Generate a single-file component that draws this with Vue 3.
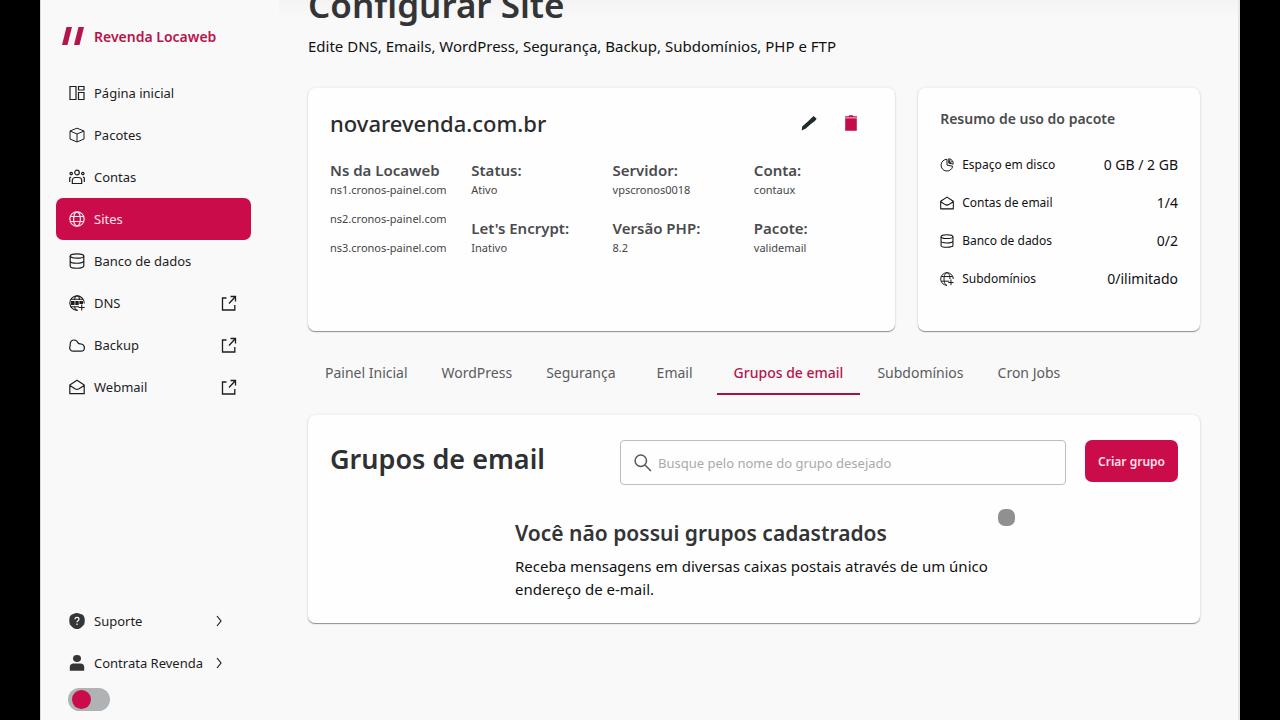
<script setup>
import { ref } from 'vue'

const menu = [
  { label: 'Página inicial', icon: 'home' },
  { label: 'Pacotes', icon: 'box' },
  { label: 'Contas', icon: 'people' },
  { label: 'Sites', icon: 'globe', active: true },
  { label: 'Banco de dados', icon: 'database' },
  { label: 'DNS', icon: 'dns', external: true },
  { label: 'Backup', icon: 'cloud', external: true },
  { label: 'Webmail', icon: 'mail', external: true }
]

const nameservers = ['ns1.cronos-painel.com', 'ns2.cronos-painel.com', 'ns3.cronos-painel.com']

const details = [
  [{ term: 'Status:', value: 'Ativo' }, { term: "Let's Encrypt:", value: 'Inativo' }],
  [{ term: 'Servidor:', value: 'vpscronos0018' }, { term: 'Versão PHP:', value: '8.2' }],
  [{ term: 'Conta:', value: 'contaux' }, { term: 'Pacote:', value: 'validemail' }]
]

const usage = [
  { label: 'Espaço em disco', icon: 'pie', value: '0 GB / 2 GB' },
  { label: 'Contas de email', icon: 'mail', value: '1/4' },
  { label: 'Banco de dados', icon: 'database', value: '0/2' },
  { label: 'Subdomínios', icon: 'subdomain', value: '0/ilimitado' }
]

const tabs = ['Painel Inicial', 'WordPress', 'Segurança', 'Email', 'Grupos de email', 'Subdomínios', 'Cron Jobs']
const activeTab = ref('Grupos de email')
const search = ref('')
const darkMode = ref(false)
</script>

<template>
  <svg class="sprite" aria-hidden="true">
    <symbol id="home" viewBox="0 0 16 16">
      <path d="M1 1.500h6v13H1zM9.500 1.500h5.500v3.500H9.500zM9.500 7.500h5.500v7H9.500z" fill="none" stroke="currentColor" stroke-width="1.200" />
    </symbol>
    <symbol id="box" viewBox="0 0 16 16">
      <path d="M8 1.200 15 4v8l-7 3-7-3V4zM1 4l7 3 7-3M8 7v8" fill="none" stroke="currentColor" stroke-linejoin="round" />
    </symbol>
    <symbol id="people" viewBox="0 0 16 16">
      <g fill="none" stroke="currentColor" stroke-width="1.200">
        <circle cx="8" cy="3.500" r="2.300" />
        <circle cx="2.200" cy="4.500" r="1.200" />
        <circle cx="13.800" cy="4.500" r="1.200" />
        <path d="M3.300 14.500v-3a3 3 0 0 1 3-3h3.400a3 3 0 0 1 3 3v3zM.7 13V8.800l1.300-.8M15.300 13V8.800L14 8" />
      </g>
    </symbol>
    <symbol id="globe" viewBox="0 0 16 16">
      <g fill="none" stroke="currentColor" stroke-width="1.200">
        <circle cx="8" cy="8" r="7.200" />
        <ellipse cx="8" cy="8" rx="3.400" ry="7.200" />
        <path d="M1.500 5.500h13M1.500 10.500h13" />
      </g>
    </symbol>
    <symbol id="database" viewBox="0 0 16 16">
      <g fill="none" stroke="currentColor" stroke-width="1.200">
        <ellipse cx="8" cy="3" rx="6.800" ry="2.200" />
        <path d="M1.200 3v10c0 3 13.600 3 13.600 0V3M1.200 8c0 3 13.600 3 13.600 0" />
      </g>
    </symbol>
    <symbol id="dns" viewBox="0 0 16 16">
      <g fill="none" stroke="currentColor" stroke-width="1.100">
        <path d="M15.200 8.500A7.200 7.200 0 1 0 9 15.200" />
        <path d="M5.500 5C5.500 3 6.500.8 8 .8S10.500 3 10.500 5M5.500 11.500c.3 2 1.200 3.700 2.500 3.700M2 4.200h12M2 11.800h8M12.700 9.500v6M9.700 12.500h6" />
      </g>
      <path d="M2 6h3.600v4H2zM6.300 6h3.400v4H6.300zM10.400 6H14v3h-3.600z" fill="currentColor" />
    </symbol>
    <symbol id="subdomain" viewBox="0 0 16 16">
      <g fill="none" stroke="currentColor" stroke-width="1.100">
        <path d="M15.200 8A7.200 7.200 0 1 0 8 15.200" />
        <path d="M11.400 8c0-4-1.500-7.200-3.400-7.200S4.600 4 4.600 8s1.500 7.200 3.400 7.200M1.500 5.200h13M1.500 10.500h9M12.500 8.500v6.500M9.500 12h6" />
      </g>
    </symbol>
    <symbol id="cloud" viewBox="0 0 16 16">
      <path d="M4.300 14.200C1.800 14.200.7 12.500.7 10.800c0-1.300.5-2 .5-3C.9 4.800 2.700 3 5 3c2.100 0 3.400 1.200 4.200 3.200.7.900 1.800.6 3 .8 2 .4 3.200 1.900 3.200 3.700 0 2-1.500 3.500-3.500 3.500z" fill="none" stroke="currentColor" stroke-width="1.200" />
    </symbol>
    <symbol id="mail" viewBox="0 0 16 16">
      <path d="M.8 6 8 1.300 15.200 6v8.700H.8zM.8 6.500 6 9.800c1.500.9 2.500.9 4 0l5.200-3.300" fill="none" stroke="currentColor" stroke-width="1.200" stroke-linejoin="round" />
    </symbol>
    <symbol id="pie" viewBox="0 0 16 16">
      <path d="M8 1.500A6.700 6.700 0 1 0 14.500 9.500L8 8zM10 .8v5l5 1.200C15.500 4 13.500 1.200 10 .8zM11.500 2l-1 3.500L14 4" fill="none" stroke="currentColor" stroke-width="1.100" />
    </symbol>
    <symbol id="external" viewBox="0 0 16 16">
      <path d="M5.500 3H1.500v12h12.300v-5M9.500 1.500h5v5M14.500 1.500 8 8.500" fill="none" stroke="currentColor" stroke-width="1.300" />
    </symbol>
    <symbol id="chevron" viewBox="0 0 8 12">
      <path d="M2 1l4 5-4 5" fill="none" stroke="currentColor" stroke-width="1.200" />
    </symbol>
    <symbol id="help" viewBox="0 0 16 16">
      <path d="M8 0c2 0 2.500.8 4.500 1.300S15 3.500 15.500 5s.3 3 0 5-1 2-2.500 3.700S10 16 8 16s-3.500-.8-5-2.300S.8 12 .5 10s-.3-3.500 0-5S1.500 2 3.500 1.300 6 0 8 0z" fill="currentColor" />
      <path d="M6 6.200c0-2.500 4-2.500 4 0 0 1.500-2 1.500-2 3M8 10.500v1.500" fill="none" stroke="#f9f9f9" stroke-width="1.200" />
    </symbol>
    <symbol id="person" viewBox="0 0 16 16">
      <ellipse cx="8" cy="3.500" rx="4" ry="3.400" fill="currentColor" />
      <path d="M.8 15.800V12c0-2 1.500-3.500 3.500-3.500h7.400c2 0 3.500 1.500 3.500 3.500v3.800z" fill="currentColor" />
    </symbol>
    <symbol id="pencil" viewBox="0 0 16 16">
      <path d="M.7 15.500 1.200 11.500 6 7.200 10.500 3l2-2 3.200 2.700-1.800 2.200-4 3.200-5.400 4.600z" fill="currentColor" />
    </symbol>
    <symbol id="trash" viewBox="0 0 14 16">
      <path d="M1 1.200h3.500L5.300.3h3.400l.8.900H13v1.200H1zM1.200 3.300h11.600v12.500H1.200z" fill="currentColor" />
    </symbol>
    <symbol id="search" viewBox="0 0 18 18">
      <g fill="none" stroke="currentColor" stroke-width="1.500">
        <circle cx="6.800" cy="6.800" r="5.700" />
        <path d="M11 11l6 6" />
      </g>
    </symbol>
  </svg>

  <div class="shell">
    <aside class="sidebar">
      <a class="brand" href="#">
        <svg class="brand-mark" viewBox="0 0 22 18" aria-hidden="true">
          <path d="M4.500 0h5.500L5.500 18H0zM16.500 0H22l-4.500 18H12z" fill="currentColor" />
        </svg>
        <span>Revenda Locaweb</span>
      </a>

      <nav class="menu" aria-label="Menu principal">
        <a v-for="item in menu" :key="item.label" href="#" class="item" :class="{ active: item.active }">
          <svg class="icon"><use :href="'#' + item.icon" /></svg>
          <span class="label">{{ item.label }}</span>
          <svg v-if="item.external" class="icon"><use href="#external" /></svg>
        </a>
      </nav>

      <div class="support">
        <a href="#" class="item">
          <svg class="icon solid"><use href="#help" /></svg>
          <span class="label">Suporte</span>
          <svg class="chevron"><use href="#chevron" /></svg>
        </a>
        <a href="#" class="item">
          <svg class="icon solid"><use href="#person" /></svg>
          <span class="label">Contrata Revenda</span>
          <svg class="chevron"><use href="#chevron" /></svg>
        </a>
        <input v-model="darkMode" class="switch" type="checkbox" role="switch" aria-label="Modo escuro" />
      </div>
    </aside>

    <main class="content">
      <h1>Configurar Site</h1>
      <p class="lead">Edite DNS, Emails, WordPress, Segurança, Backup, Subdomínios, PHP e FTP</p>

      <div class="overview">
        <section class="card site">
          <header class="site-head">
            <h2>novarevenda.com.br</h2>
            <button class="icon-button" type="button" aria-label="Editar"><svg class="icon"><use href="#pencil" /></svg></button>
            <button class="icon-button danger" type="button" aria-label="Excluir"><svg class="icon"><use href="#trash" /></svg></button>
          </header>
          <div class="details">
            <dl class="ns">
              <dt>Ns da Locaweb</dt>
              <dd v-for="ns in nameservers" :key="ns">{{ ns }}</dd>
            </dl>
            <div v-for="(column, i) in details" :key="i" class="column">
              <dl v-for="entry in column" :key="entry.term">
                <dt>{{ entry.term }}</dt>
                <dd>{{ entry.value }}</dd>
              </dl>
            </div>
          </div>
        </section>

        <section class="card summary">
          <h3>Resumo de uso do pacote</h3>
          <ul>
            <li v-for="row in usage" :key="row.label">
              <svg class="small-icon"><use :href="'#' + row.icon" /></svg>
              <span class="label">{{ row.label }}</span>
              <span class="amount">{{ row.value }}</span>
            </li>
          </ul>
        </section>
      </div>

      <div class="tabs" role="tablist">
        <button
          v-for="tab in tabs"
          :key="tab"
          type="button"
          role="tab"
          class="tab"
          :class="{ selected: tab === activeTab }"
          :aria-selected="tab === activeTab"
          @click="activeTab = tab"
        >{{ tab }}</button>
      </div>

      <section class="card groups">
        <header class="groups-head">
          <h2>Grupos de email</h2>
          <label class="search">
            <svg class="search-icon"><use href="#search" /></svg>
            <input v-model="search" type="text" placeholder="Busque pelo nome do grupo desejado" aria-label="Buscar grupo" />
          </label>
          <button class="primary" type="button">Criar grupo</button>
        </header>
        <div class="empty">
          <h3>Você não possui grupos cadastrados</h3>
          <p>Receba mensagens em diversas caixas postais através de um único endereço de e-mail.</p>
        </div>
        <span class="pointer" aria-hidden="true"></span>
      </section>
    </main>
  </div>
</template>

<style>
body {
  background: #000;
}
</style>

<style scoped>
.sprite {
  position: absolute;
  width: 0;
  height: 0;
}

.shell {
  box-sizing: border-box;
  display: flex;
  height: 100vh;
  margin: 0 40px;
  overflow: hidden;
  background: #f9f9f9;
  border-left: 1px solid #d9d9e0;
  border-right: 2px solid #e6e6e6;
  color: #1d1d1f;
  font-family: "Noto Sans", "Open Sans", sans-serif;
  font-size: 13px;
}

h1, h2, h3, p, dl, dd, ul {
  margin: 0;
  padding: 0;
}

a {
  color: inherit;
  text-decoration: none;
}

button, input {
  font: inherit;
}

svg {
  flex: none;
}

.icon {
  width: 16px;
  height: 16px;
}

.sidebar {
  box-sizing: border-box;
  display: flex;
  flex-direction: column;
  flex: none;
  width: 238px;
  padding: 24px 28px 9px 15px;
}

.brand {
  display: flex;
  align-items: center;
  gap: 10px;
  height: 24px;
  margin-bottom: 24px;
  padding-left: 6px;
  color: #b8144b;
  font-size: 14px;
  font-weight: 600;
}

.brand-mark {
  width: 22px;
  height: 18px;
}

.item {
  display: flex;
  align-items: center;
  gap: 9px;
  height: 42px;
  padding: 0 14px 0 13px;
  border-radius: 7px;
}

.item .label {
  flex: 1;
  white-space: nowrap;
}

.item.active {
  background: #cb0c4b;
  color: #fbe3ec;
}

.solid {
  color: #353638;
}

.support {
  margin-top: auto;
}

.support .item {
  padding-right: 28px;
}

.chevron {
  width: 8px;
  height: 12px;
}

.switch {
  appearance: none;
  display: block;
  width: 42px;
  height: 23px;
  margin: 4px 0 0 12px;
  padding: 2px 4px;
  border-radius: 12px;
  background: #b0b3b6;
}

.switch::before {
  content: "";
  display: block;
  width: 19px;
  height: 19px;
  border-radius: 50%;
  background: #cb0c4b;
}

.switch:checked::before {
  margin-left: auto;
}

.content {
  flex: 1;
  min-width: 0;
  padding: 0 38px 0 29px;
  background: linear-gradient(#f4f4f4, #f9f9f9 20px);
}

h1 {
  margin-top: -18px;
  color: #333436;
  font-size: 35px;
  font-weight: 600;
  line-height: 46px;
}

.lead {
  margin-top: 6px;
  color: #111;
  font-size: 15px;
  line-height: 24px;
}

.card {
  box-sizing: border-box;
  border-radius: 7px;
  background: #fefefe;
  box-shadow: 0 1px 1px #8f8f8f, 0 0 3px #e2e2e2;
}

.overview {
  display: grid;
  grid-template-columns: minmax(0, 25fr) minmax(0, 12fr);
  gap: 23px;
  margin-top: 30px;
}

.site {
  min-height: 243px;
  padding: 20px 22px;
}

.site-head {
  display: flex;
  align-items: center;
  gap: 18px;
  height: 30px;
  padding-right: 10px;
}

.site-head h2 {
  flex: 1;
  color: #2b2c2e;
  font-size: 22px;
  font-weight: 500;
}

.icon-button {
  display: flex;
  padding: 4px;
  border: 0;
  background: none;
  color: #1f2a2e;
}

.icon-button.danger {
  color: #c30d49;
}

.details {
  display: grid;
  grid-template-columns: repeat(4, minmax(0, 1fr));
  gap: 22px;
  margin-top: 22px;
}

.column {
  display: flex;
  flex-direction: column;
  gap: 18px;
}

dt {
  color: #4a4b4d;
  font-size: 15px;
  font-weight: 600;
  line-height: 20px;
  white-space: nowrap;
}

dd {
  color: #454648;
  font-size: 11px;
  line-height: 20px;
  white-space: nowrap;
}

.ns dd + dd {
  margin-top: 9px;
}

.summary {
  padding: 20px 22px;
}

.summary h3 {
  color: #4a4b4d;
  font-size: 14px;
  font-weight: 600;
  line-height: 22px;
}

.summary ul {
  display: grid;
  gap: 20px;
  margin-top: 26px;
  list-style: none;
}

.summary li {
  display: flex;
  align-items: center;
  gap: 8px;
  color: #111;
  font-size: 12px;
  line-height: 18px;
}

.summary .label {
  flex: 1;
}

.amount {
  font-size: 14px;
}

.small-icon {
  width: 14px;
  height: 14px;
}

.tabs {
  display: flex;
  margin-top: 20px;
}

.tab {
  box-sizing: border-box;
  min-width: 84px;
  height: 44px;
  padding: 0 17px;
  border: 0;
  border-bottom: 2px solid transparent;
  background: none;
  color: #5b5c5e;
  font-size: 14px;
  white-space: nowrap;
}

.tab.selected {
  border-color: #a31145;
  color: #b8144b;
  font-weight: 500;
}

.groups {
  position: relative;
  margin-top: 20px;
  padding: 25px 22px 22px;
}

.groups-head {
  display: flex;
  align-items: flex-start;
}

.groups-head h2 {
  flex: 1;
  color: #2f3032;
  font-size: 27px;
  font-weight: 600;
  line-height: 38px;
  white-space: nowrap;
}

.search {
  box-sizing: border-box;
  display: flex;
  align-items: center;
  gap: 6px;
  width: 53%;
  max-width: 446px;
  height: 45px;
  padding: 0 13px;
  border: 1px solid #bdbdbd;
  border-radius: 4px;
}

.search-icon {
  width: 18px;
  height: 18px;
  color: #555658;
}

.search input {
  flex: 1;
  min-width: 0;
  padding: 0;
  border: 0;
  outline: 0;
  background: none;
}

.search input::placeholder {
  color: #a9aaac;
  opacity: 1;
}

.primary {
  height: 42px;
  min-width: 93px;
  margin-left: 19px;
  padding: 0 10px;
  border: 0;
  border-radius: 7px;
  background: #cb0c4b;
  color: #fbe3ec;
  font-size: 12px;
  font-weight: 600;
  white-space: nowrap;
}

.empty {
  max-width: 478px;
  margin: 33px auto 0;
}

.empty h3 {
  color: #333436;
  font-size: 21px;
  font-weight: 600;
  line-height: 30px;
}

.empty p {
  margin-top: 7px;
  color: #111;
  font-size: 15px;
  line-height: 23px;
}

.pointer {
  position: absolute;
  top: 94px;
  right: 185px;
  width: 17px;
  height: 17px;
  border-radius: 7px;
  background: #909090;
}
</style>
